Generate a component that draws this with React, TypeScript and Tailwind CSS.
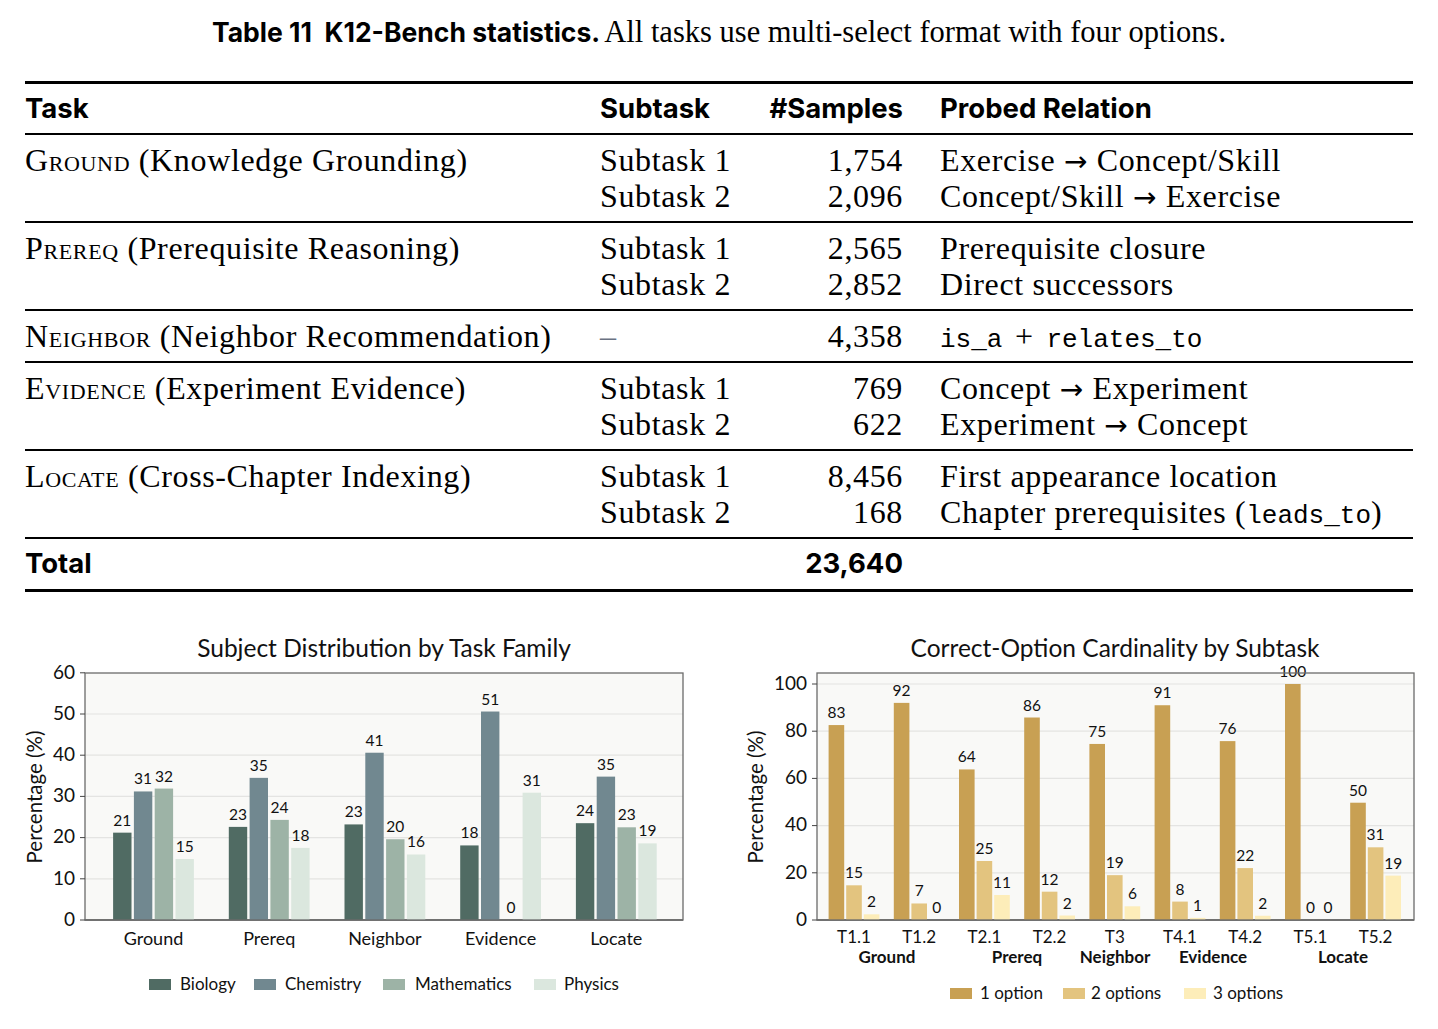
import React from 'react';

const serif = "font-['Liberation_Serif','Times_New_Roman',serif]";
const sans = "font-['Inter','Lato',sans-serif]";
const mono = "font-['Liberation_Mono','DejaVu_Sans_Mono',monospace] text-[26px] tracking-normal";
const chartFont = "'Comic Sans MS', 'Lato', sans-serif";

type Row = [string, string, React.ReactNode];
type Group = { task: string; desc: string; rows: Row[] };

const Arrow = () => <span className="font-['DejaVu_Sans',sans-serif] text-[28px]">→</span>;

const groups: Group[] = [
    {
        task: 'Ground',
        desc: '(Knowledge Grounding)',
        rows: [
            ['Subtask 1', '1,754', <>Exercise <Arrow /> Concept/Skill</>],
            ['Subtask 2', '2,096', <>Concept/Skill <Arrow /> Exercise</>],
        ],
    },
    {
        task: 'Prereq',
        desc: '(Prerequisite Reasoning)',
        rows: [
            ['Subtask 1', '2,565', 'Prerequisite closure'],
            ['Subtask 2', '2,852', 'Direct successors'],
        ],
    },
    {
        task: 'Neighbor',
        desc: '(Neighbor Recommendation)',
        rows: [
            ['–', '4,358', <><span className={mono}>is_a</span> <span className="mx-[4px]">+</span> <span className={mono}>relates_to</span></>],
        ],
    },
    {
        task: 'Evidence',
        desc: '(Experiment Evidence)',
        rows: [
            ['Subtask 1', '769', <>Concept <Arrow /> Experiment</>],
            ['Subtask 2', '622', <>Experiment <Arrow /> Concept</>],
        ],
    },
    {
        task: 'Locate',
        desc: '(Cross-Chapter Indexing)',
        rows: [
            ['Subtask 1', '8,456', 'First appearance location'],
            ['Subtask 2', '168', <>Chapter prerequisites (<span className={mono}>leads_to</span>)</>],
        ],
    },
];

const subjects = [
    { name: 'Biology', color: '#506b63', values: [21.2, 22.6, 23.2, 18.1, 23.5] },
    { name: 'Chemistry', color: '#718890', values: [31.2, 34.5, 40.6, 50.6, 34.8] },
    { name: 'Mathematics', color: '#9db3a6', values: [31.9, 24.3, 19.6, 0, 22.5] },
    { name: 'Physics', color: '#dbe7de', values: [14.8, 17.5, 15.9, 30.9, 18.6] },
];
const families = ['Ground', 'Prereq', 'Neighbor', 'Evidence', 'Locate'];

const cardColors = ['#c8a053', '#e3c47f', '#fdedb9'];
const subtasks: { name: string; values: number[] }[] = [
    { name: 'T1.1', values: [82.6, 14.7, 2.4] },
    { name: 'T1.2', values: [92, 7, 0] },
    { name: 'T2.1', values: [63.8, 25, 10.6] },
    { name: 'T2.2', values: [85.8, 12, 1.9] },
    { name: 'T3', values: [74.6, 19, 5.8] },
    { name: 'T4.1', values: [91, 7.8, 0.9] },
    { name: 'T4.2', values: [75.8, 22, 1.8] },
    { name: 'T5.1', values: [100, 0, 0] },
    { name: 'T5.2', values: [49.7, 30.8, 18.8] },
];
const familyLabels = [
    { name: 'Ground', x: 168 },
    { name: 'Prereq', x: 298 },
    { name: 'Neighbor', x: 396 },
    { name: 'Evidence', x: 494 },
    { name: 'Locate', x: 624 },
];

const SubjectChart = () => {
    const left = 85;
    const right = 683;
    const zero = 300;
    const scale = 4.12;
    return (
        <svg width={719} height={409} fontFamily={chartFont}>
            <text x={384} y={31} textAnchor="middle" dominantBaseline="middle" fontSize={24.5} fill="#111">
                Subject Distribution by Task Family
            </text>
            <rect x={left} y={53} width={right - left} height={zero - 53} fill="#f9f9f7" />
            {[10, 20, 30, 40, 50].map((v) => (
                <line key={v} x1={left} x2={right} y1={zero - v * scale} y2={zero - v * scale} stroke="#e4e4e2" strokeWidth={1.2} />
            ))}
            <line x1={left} x2={right} y1={zero} y2={zero} stroke="#555" strokeWidth={1.6} />
            {families.map((f, g) => {
                const c = 153.5 + g * 115.7;
                return (
                    <g key={f}>
                        {subjects.map((s, k) => {
                            const v = s.values[g];
                            const x = c - 41.6 + k * 20.8;
                            const top = zero - v * scale;
                            return (
                                <g key={s.name}>
                                    {v > 0 && <rect x={x + 1.2} y={top} width={18.4} height={v * scale} fill={s.color} />}
                                    <text x={x + 10.4} y={top - 7} textAnchor="middle" fontSize={15.5} fill="#111">
                                        {Math.round(v)}
                                    </text>
                                </g>
                            );
                        })}
                        <text x={c} y={320} textAnchor="middle" dominantBaseline="middle" fontSize={18} fill="#111">
                            {f}
                        </text>
                    </g>
                );
            })}
            <rect x={left} y={53} width={right - left} height={zero - 53} fill="none" stroke="#6b6b6b" strokeWidth={1.3} />
            {[0, 10, 20, 30, 40, 50, 60].map((v) => (
                <g key={v}>
                    <line x1={left - 5} x2={left} y1={zero - v * scale} y2={zero - v * scale} stroke="#444" strokeWidth={1} />
                    <text x={left - 10} y={zero - v * scale + 1} textAnchor="end" dominantBaseline="middle" fontSize={19} fill="#111">
                        {v}
                    </text>
                </g>
            ))}
            <text transform="translate(37 177) rotate(-90)" textAnchor="middle" dominantBaseline="middle" fontSize={20.5} fill="#111">
                Percentage (%)
            </text>
            {[
                { i: 0, sx: 149, tx: 180 },
                { i: 1, sx: 254, tx: 285 },
                { i: 2, sx: 383, tx: 415 },
                { i: 3, sx: 534, tx: 564 },
            ].map(({ i, sx, tx }) => (
                <g key={i}>
                    <rect x={sx} y={359} width={22} height={11} fill={subjects[i].color} />
                    <text x={tx} y={366} dominantBaseline="middle" fontSize={17} fill="#111">
                        {subjects[i].name}
                    </text>
                </g>
            ))}
        </svg>
    );
};

const CardinalityChart = () => {
    const left = 98;
    const right = 695;
    const zero = 300;
    const scale = 2.36;
    return (
        <svg width={719} height={409} fontFamily={chartFont}>
            <text x={396} y={31} textAnchor="middle" dominantBaseline="middle" fontSize={24.5} fill="#111">
                Correct-Option Cardinality by Subtask
            </text>
            <rect x={left} y={53} width={right - left} height={zero - 53} fill="#f9f9f7" />
            {[20, 40, 60, 80, 100].map((v) => (
                <line key={v} x1={left} x2={right} y1={zero - v * scale} y2={zero - v * scale} stroke="#e4e4e2" strokeWidth={1.2} />
            ))}
            <line x1={left} x2={right} y1={zero} y2={zero} stroke="#555" strokeWidth={1.6} />
            {subtasks.map((t, g) => {
                const c = 135 + g * 65.2;
                return (
                    <g key={t.name}>
                        {t.values.map((v, k) => {
                            const x = c - 26.4 + k * 17.6;
                            const top = zero - v * scale;
                            return (
                                <g key={k}>
                                    {v > 0 && <rect x={x + 1} y={top} width={15.6} height={v * scale} fill={cardColors[k]} />}
                                    <text x={x + 8.8} y={top - 7} textAnchor="middle" fontSize={15.5} fill="#111">
                                        {Math.round(v)}
                                    </text>
                                </g>
                            );
                        })}
                        <text x={c} y={319} textAnchor="middle" dominantBaseline="middle" fontSize={17} fill="#111">
                            {t.name}
                        </text>
                    </g>
                );
            })}
            {familyLabels.map((f) => (
                <text key={f.name} x={f.x} y={339} textAnchor="middle" dominantBaseline="middle" fontSize={17} fontWeight={700} fill="#111">
                    {f.name}
                </text>
            ))}
            <rect x={left} y={53} width={right - left} height={zero - 53} fill="none" stroke="#6b6b6b" strokeWidth={1.3} />
            {[0, 20, 40, 60, 80, 100].map((v) => (
                <g key={v}>
                    <line x1={left - 5} x2={left} y1={zero - v * scale} y2={zero - v * scale} stroke="#444" strokeWidth={1} />
                    <text x={left - 10} y={zero - v * scale + 1} textAnchor="end" dominantBaseline="middle" fontSize={19} fill="#111">
                        {v}
                    </text>
                </g>
            ))}
            <text transform="translate(39 177) rotate(-90)" textAnchor="middle" dominantBaseline="middle" fontSize={20.5} fill="#111">
                Percentage (%)
            </text>
            {[
                { i: 0, sx: 231, tx: 261, label: '1 option' },
                { i: 1, sx: 344, tx: 372, label: '2 options' },
                { i: 2, sx: 465, tx: 494, label: '3 options' },
            ].map(({ i, sx, tx, label }) => (
                <g key={i}>
                    <rect x={sx} y={368} width={22} height={11} fill={cardColors[i]} />
                    <text x={tx} y={375} dominantBaseline="middle" fontSize={17} fill="#111">
                        {label}
                    </text>
                </g>
            ))}
        </svg>
    );
};

const TaskGroup: React.FC<{ group: Group }> = ({ group }) => (
    <div className="flex py-[7px] border-b-2 border-black">
        <div className="w-[575px]">
            <div className="h-9 leading-9 whitespace-nowrap">
                <span className="[font-variant-caps:small-caps]">{group.task}</span> {group.desc}
            </div>
        </div>
        <div className="w-[168px]">
            {group.rows.map((r, i) => (
                <div key={i} className={`h-9 leading-9 ${r[0] === '–' ? 'text-gray-500' : ''}`}>
                    {r[0]}
                </div>
            ))}
        </div>
        <div className="w-[135px] text-right">
            {group.rows.map((r, i) => (
                <div key={i} className="h-9 leading-9">
                    {r[1]}
                </div>
            ))}
        </div>
        <div className="flex-1 pl-[37px]">
            {group.rows.map((r, i) => (
                <div key={i} className="h-9 leading-9 whitespace-nowrap">
                    {r[2]}
                </div>
            ))}
        </div>
    </div>
);

export default function App() {
    return (
        <div className="w-[1438px] h-[1029px] bg-white text-black overflow-hidden">
            <div className="pt-4 h-12 text-center leading-8 whitespace-nowrap">
                <span className={`${sans} font-bold text-[26.5px]`}>Table 11&nbsp;&nbsp;K12-Bench statistics.</span>{' '}
                <span className={`${serif} text-[30.5px]`}>All tasks use multi-select format with four options.</span>
            </div>

            <div className={`mx-[25px] mt-[33px] border-t-[3px] border-black ${serif} text-[32px] tracking-[0.02em]`}>
                <div className={`flex h-[51px] items-center border-b-2 border-black ${sans} font-bold text-[27.5px] tracking-normal`}>
                    <div className="w-[575px]">Task</div>
                    <div className="w-[168px]">Subtask</div>
                    <div className="w-[135px] text-right">#Samples</div>
                    <div className="flex-1 pl-[37px]">Probed Relation</div>
                </div>
                {groups.map((g) => (
                    <TaskGroup key={g.task} group={g} />
                ))}
                <div className={`flex h-[53px] items-center border-b-[3px] border-black ${sans} font-bold text-[27.5px] tracking-normal`}>
                    <div className="w-[575px]">Total</div>
                    <div className="w-[168px]" />
                    <div className="w-[135px] text-right">23,640</div>
                    <div className="flex-1" />
                </div>
            </div>

            <div className="flex mt-[28px]">
                <SubjectChart />
                <CardinalityChart />
            </div>
        </div>
    );
}
